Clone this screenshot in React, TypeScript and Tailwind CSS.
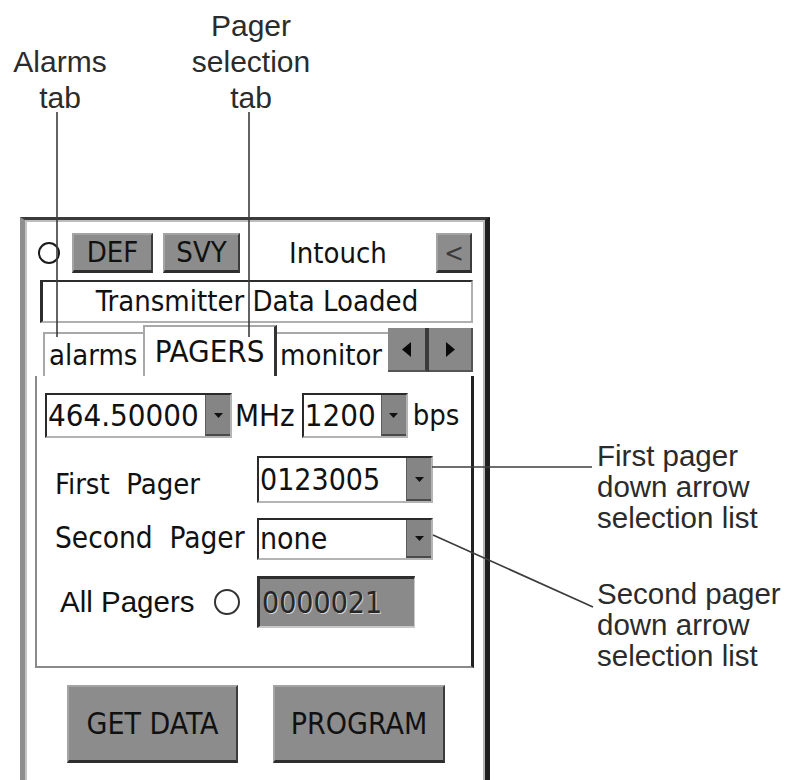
import React from 'react';

const screenFont = "font-['DejaVu_Sans_Condensed','DejaVu_Sans',sans-serif] [font-stretch:condensed]";
const noteFont = "font-['Liberation_Sans',Arial,sans-serif]";

// little black down triangle used on every drop-down button
function DropButton() {
  return (
    <div className="w-[25px] shrink-0 bg-[#858585] border-l border-[#5c5c5c] border-b-2 border-b-[#4a4a4a] flex items-center justify-center">
      <svg width="9" height="6" viewBox="0 0 9 6">
        <path d="M0 1h9L4.5 6z" fill="#111" />
      </svg>
    </div>
  );
}

function Combo({ value, className }: { value: string; className: string }) {
  return (
    <div
      className={`flex bg-white border-t-2 border-l-2 border-t-[#2a2a2a] border-l-[#2a2a2a] border-b-2 border-r-2 border-b-[#b4b4b4] border-r-[#b4b4b4] ${className}`}
    >
      <div className="flex-1 flex items-center pl-[1px] overflow-hidden whitespace-nowrap">{value}</div>
      <DropButton />
    </div>
  );
}

function GrayButton({ label, className }: { label: string; className: string }) {
  return (
    <div
      className={`flex items-center justify-center bg-[#8c8c8c] text-[#111] border-l-2 border-t-2 border-l-[#a4a4a4] border-t-[#a4a4a4] border-r-2 border-r-[#3c3c3c] border-b-[3px] border-b-[#2e2e2e] ${className}`}
    >
      {label}
    </div>
  );
}

function Device() {
  return (
    <div className="ml-[20px] w-[470px] h-[563px] border-t-[3px] border-t-[#3a3a3a] border-l-[5px] border-l-[#8e8e8e] border-r-[5px] border-r-[#1e1e1e]">
      <div className={`h-full border-t-2 border-l-2 border-r-2 border-t-[#bdbdbd] border-l-[#c4c4c4] border-r-[#b4b4b4] pt-[11px] pl-[8px] pr-[10px] text-[#111] ${screenFont}`}>
        {/* top bar */}
        <div className="flex items-center h-[40px] text-[29px]">
          <div className="ml-[3px] w-[22px] h-[22px] rounded-full border-2 border-[#1a1a1a]" />
          <GrayButton label="DEF" className="ml-[12px] w-[81px] h-[40px]" />
          <GrayButton label="SVY" className="ml-[10px] w-[77px] h-[40px]" />
          <div className="flex-1 text-center leading-none">Intouch</div>
          <div className="mr-[1px] w-[36px] h-[40px] flex items-center justify-center bg-[#8c8c8c] border-l-2 border-t-2 border-[#a4a4a4] border-r-2 border-r-[#3c3c3c] border-b-[3px] border-b-[#2e2e2e] text-[#3a3a3a] text-[26px] leading-none">
          &lt;
          </div>
        </div>

        {/* status line */}
        <div className="mt-[7px] ml-[5px] w-[433px] h-[43px] flex items-center justify-center bg-white border-t-2 border-l-[3px] border-t-[#2c2c2c] border-l-[#2c2c2c] border-r-2 border-b-2 border-r-[#b0b0b0] border-b-[#b0b0b0] text-[29px] leading-none">
          Transmitter Data Loaded
        </div>

        {/* tabs */}
        <div className="mt-[2px] h-[51px] flex items-end text-[29px] leading-none">
          <div className="ml-[8px] w-[100px] h-[44px] flex items-center pl-[4px] border-t-2 border-l-2 border-[#a8a8a8]">
            alarms
          </div>
          <div className="w-[134px] h-[51px] flex items-center justify-center border-t-2 border-l-2 border-[#a8a8a8] border-r-[3px] border-r-[#333] bg-white text-[31px]">
            PAGERS
          </div>
          <div className="w-[111px] h-[44px] flex items-center pl-[3px] border-t-2 border-[#a8a8a8] overflow-hidden whitespace-nowrap">
            monitor
          </div>
          <div className="mb-[4px] w-[85px] h-[44px] flex bg-[#888]">
            <div className="w-[41px] flex items-center justify-center border-r-[4px] border-[#3a3a3a] border-b-2 border-b-[#555]">
              <svg width="9" height="15" viewBox="0 0 9 15">
                <path d="M9 0v15L0 7.5z" fill="#0a0a0a" />
              </svg>
            </div>
            <div className="flex-1 flex items-center justify-center border-r-2 border-[#555] border-b-2 border-b-[#555]">
              <svg width="9" height="15" viewBox="0 0 9 15">
                <path d="M0 0v15L9 7.5z" fill="#0a0a0a" />
              </svg>
            </div>
          </div>
        </div>

        {/* PAGERS tab page */}
        <div className="w-[439px] h-[292px] bg-white border-l-2 border-b-2 border-[#8a8a8a] border-r-[3px] border-r-[#222] pt-[17px] pl-[8px]">
          <div className="flex items-center h-[45px] leading-none">
            <Combo value="464.50000" className="w-[187px] h-[45px] text-[31px]" />
            <span className="ml-[3px] text-[31px]">MHz</span>
            <Combo value="1200" className="ml-[7px] w-[106px] h-[45px] text-[31px]" />
            <span className="ml-[5px] text-[29px]">bps</span>
          </div>

          <div className="mt-[18px] flex items-center h-[47px] leading-none">
            <div className="w-[212px] pl-[10px] pt-[10px] text-[29px] whitespace-pre">First  Pager</div>
            <Combo value="0123005" className="w-[176px] h-[47px] text-[30px]" />
          </div>

          <div className="mt-[15px] flex items-center h-[42px] leading-none">
            <div className="w-[212px] pl-[10px] text-[29.5px] whitespace-pre">Second  Pager</div>
            <Combo value="none" className="w-[176px] h-[42px] text-[30px]" />
          </div>

          <div className="mt-[16px] flex items-center h-[52px] leading-none">
            <div className="w-[212px] flex items-center">
              <span className={`pl-[15px] text-[29.5px] ${noteFont}`}>All Pagers</span>
              <div className="ml-auto mr-[17px] w-[26px] h-[26px] rounded-full border-2 border-[#333]" />
            </div>
            <div className="w-[158px] h-[52px] flex items-center pl-[2px] bg-[#8a8a8a] border-t-[3px] border-l-[3px] border-[#2e2e2e] border-r border-b-2 border-r-[#c8c8c8] border-b-[#c8c8c8] text-[30px] text-[#262626] [text-shadow:1px_1px_0_#d0d0d0]">
              0000021
            </div>
          </div>
        </div>

        {/* bottom buttons */}
        <div className="mt-[17px] flex text-[30px] leading-none">
          <GrayButton label="GET DATA" className="ml-[32px] w-[171px] h-[78px]" />
          <GrayButton label="PROGRAM" className="ml-[35px] w-[172px] h-[78px]" />
        </div>
      </div>
    </div>
  );
}

export default function App() {
  return (
    <div className={`relative w-[788px] h-[780px] overflow-hidden bg-white text-[#2b2b2b] ${noteFont}`}>
      <div className="flex">
        <div className="w-[490px] shrink-0">
          {/* callouts over the tab strip */}
          <div className="h-[217px] pt-[8px] flex items-start text-[30px] leading-[36px]">
            <div className="mt-[36px] w-[120px] text-center">
              <div>Alarms</div>
              <div>tab</div>
            </div>
            <div className="ml-[51px] w-[160px] text-center">
              <div>Pager</div>
              <div>selection</div>
              <div>tab</div>
            </div>
          </div>
          <Device />
        </div>

        {/* callouts to the right */}
        <div className="pl-[107px] pt-[440px] text-[29.5px] leading-[31px] whitespace-nowrap">
          <div>First pager</div>
          <div>down arrow</div>
          <div>selection list</div>
          <div className="mt-[45px]">Second pager</div>
          <div>down arrow</div>
          <div>selection list</div>
        </div>
      </div>

      {/* leader lines */}
      <svg className="absolute inset-0 pointer-events-none" width="788" height="780">
        <g stroke="#3c3c3c" strokeWidth="1.6" fill="none">
          <path d="M57 112V337" />
          <path d="M249 112V337" />
          <path d="M432 467H592" />
          <path d="M433 535L593 607" />
        </g>
      </svg>
    </div>
  );
}
